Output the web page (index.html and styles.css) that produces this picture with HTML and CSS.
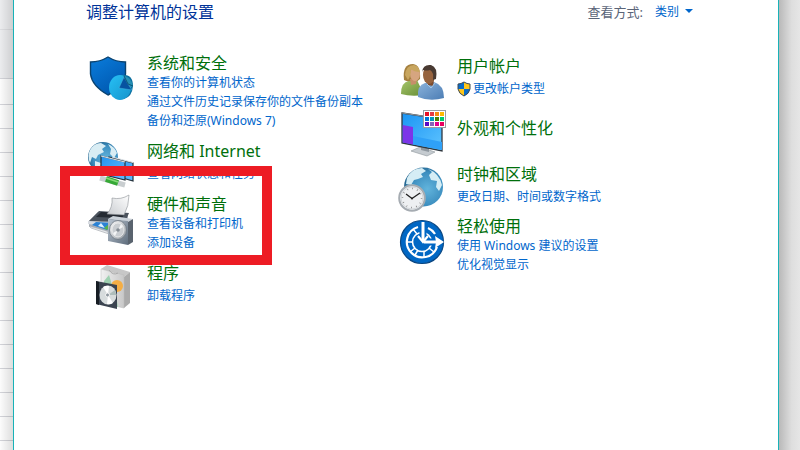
FILE: index.html
```html
<!DOCTYPE html>
<html lang="zh-CN">
<head>
    <meta charset="UTF-8">
    <meta name="viewport" content="width=device-width, initial-scale=1.0">
    <title>控制面板</title>
    <link rel="stylesheet" href="styles.css">
</head>
<body>
    <div class="behind-left"></div>
    <main class="panel">
        <header class="panel-header">
            <h1>调整计算机的设置</h1>
            <div class="view-by">
                <label for="view">查看方式:</label>
                <span class="view-select">
                    <select id="view">
                        <option>类别</option>
                    </select>
                </span>
            </div>
        </header>

        <div class="columns">
            <div class="column">
                <section class="category">
                    <svg class="icon" viewBox="0 0 48 46">
                        <defs>
                            <linearGradient id="shield" x1="0" y1="0" x2="0.6" y2="1">
                                <stop offset="0" stop-color="#0a7ddc"/>
                                <stop offset="1" stop-color="#0058b0"/>
                            </linearGradient>
                            <linearGradient id="pie" x1="0" y1="0" x2="1" y2="1">
                                <stop offset="0" stop-color="#27c0f5"/>
                                <stop offset="1" stop-color="#1594cc"/>
                            </linearGradient>
                        </defs>
                        <path d="M3.500 9 Q13 9 21 4 Q29 9 38.500 9 V21 Q37 34 21 42 Q5 33 3.500 21 Z" fill="url(#shield)" stroke="#0a4370" stroke-width="1.400"/>
                        <path d="M33 22 Q46 20 46 33 Q45 44 37 46 L32 46 Z" fill="#0b6f9f"/>
                        <ellipse cx="33" cy="34.500" rx="11" ry="12.500" fill="url(#pie)"/>
                        <path d="M37 23 Q44 24 46 33 L41 36 Z" fill="#2690b5"/>
                        <path d="M37 24 L32 35 L45 37 L41 31 Z" fill="#0752a0" stroke="#47b7dd" stroke-width=".5"/>
                        <path d="M37 23 L41 31 L46 33" fill="none" stroke="#0b5377"/>
                    </svg>
                    <div class="category-text">
                        <h2><a href="#">系统和安全</a></h2>
                        <ul>
                            <li><a href="#">查看你的计算机状态</a></li>
                            <li><a href="#">通过文件历史记录保存你的文件备份副本</a></li>
                            <li><a href="#">备份和还原(Windows 7)</a></li>
                        </ul>
                    </div>
                </section>

                <section class="category single">
                    <svg class="icon" viewBox="0 0 48 46">
                        <defs>
                            <radialGradient id="globe" cx=".6" cy=".55" r=".6">
                                <stop offset="0" stop-color="#62b4dc"/>
                                <stop offset=".7" stop-color="#3d8fc0"/>
                                <stop offset="1" stop-color="#24658f"/>
                            </radialGradient>
                            <linearGradient id="screen" x1="0" y1="0" x2="1" y2="1">
                                <stop offset="0" stop-color="#2493ec"/>
                                <stop offset="1" stop-color="#62baff"/>
                            </linearGradient>
                        </defs>
                        <circle cx="16" cy="18" r="15" fill="url(#globe)"/>
                        <path d="M3 11 Q7 4 14 4 L19 7 L15 10 L17 13 L11 16 L9 20 L5 18 L3 24 Q0 17 3 11 Z M21 5 Q28 8 30 14 L27 19 L23 15 L24 10 Z M8 22 L14 24 L13 31 L8 29 Z" fill="#d9edf4"/>
                        <path d="M22 18 L46 24 V42 L22 35 Z" fill="url(#screen)" stroke="#24323d" stroke-width="1.200"/>
                        <path d="M14 17 L38 23 V41 L14 35 Z" fill="url(#screen)" stroke="#24323d" stroke-width="1.200"/>
                        <path d="M14 17 L38 23 M25 18 L46 23.500" stroke="#dce2e6" stroke-width="1.200"/>
                        <path d="M13 39 L38 46" stroke="#c9ced0" stroke-width="5"/>
                        <path d="M19 40 L31 44" stroke="#36a936" stroke-width="6"/>
                        <path d="M19 39 L31 43" stroke="#86da78" stroke-width="1.500"/>
                    </svg>
                    <div class="category-text">
                        <h2><a href="#">网络和 Internet</a></h2>
                        <ul>
                            <li><a href="#">查看网络状态和任务</a></li>
                        </ul>
                    </div>
                </section>

                <section class="category highlighted">
                    <svg class="icon" viewBox="0 0 48 46">
                        <defs>
                            <linearGradient id="paper" x1="0" y1="1" x2="1" y2="0">
                                <stop offset="0" stop-color="#c9ccd0"/>
                                <stop offset="1" stop-color="#fff"/>
                            </linearGradient>
                            <linearGradient id="speaker" x1="0" y1="0" x2="1" y2="1">
                                <stop offset="0" stop-color="#b9c4d0"/>
                                <stop offset="1" stop-color="#5f6d7c"/>
                            </linearGradient>
                            <linearGradient id="cone" x1="0" y1="0" x2="1" y2="1">
                                <stop offset="0" stop-color="#fff"/>
                                <stop offset="1" stop-color="#8d959d"/>
                            </linearGradient>
                        </defs>
                        <path d="M2 27 L11 18 L41 19 V31 L22 38 L2 32 Z" fill="#a9afb8"/>
                        <path d="M2 27 L12 17 L42 19 L38 28 Z" fill="#4b535d"/>
                        <path d="M14 18 L38 19 L35 24 L9 23 Z" fill="#252b33"/>
                        <path d="M20 20 Q26 13 25 4 Q34 6 42 1 Q42 12 37 21 Z" fill="url(#paper)" stroke="#8c9095" stroke-width=".6"/>
                        <path d="M1 27 L28 29 L24 33 L1 30 Z" fill="#d7dbe1"/>
                        <path d="M5 31 L9 28 L27 29 L20 36 Z" fill="#2b82d4"/>
                        <path d="M11 32 L14 29 L18 34 Z" fill="#dff1ff"/>
                        <path d="M17 34 L22 30 L25 31 L20 36 Z" fill="#56b44a"/>
                        <path d="M2 32 L20 37 L22 40 L4 34 Z" fill="#e7e9ec" stroke="#8e949b" stroke-width=".5"/>
                        <path d="M21 25 L26 22 L46 25 L41 28 Z" fill="#ccd3da"/>
                        <path d="M41 28 L46 25 V48 L41 51 Z" fill="#59636e"/>
                        <path d="M21 25 L41 27 V51 L21 47 Z" fill="url(#speaker)"/>
                        <ellipse cx="31" cy="36" rx="8.500" ry="9.500" fill="url(#cone)" stroke="#6d7781" stroke-width=".8"/>
                        <ellipse cx="31" cy="36" rx="6" ry="7" fill="#c9cdd1" stroke="#eee" stroke-width=".8"/>
                        <path d="M31 36 L34 30 L36 33 Z M31 36 L28 42 L26 39 Z" fill="#f4f5f6"/>
                        <circle cx="31" cy="36" r="1.800" fill="#858d95"/>
                    </svg>
                    <div class="category-text">
                        <h2><a href="#">硬件和声音</a></h2>
                        <ul>
                            <li><a href="#">查看设备和打印机</a></li>
                            <li><a href="#">添加设备</a></li>
                        </ul>
                    </div>
                </section>

                <section class="category single">
                    <svg class="icon" viewBox="0 0 48 46">
                        <defs>
                            <linearGradient id="box" x1="0" y1="0" x2="1" y2="0">
                                <stop offset="0" stop-color="#f1f1f1"/>
                                <stop offset="1" stop-color="#c8c8c8"/>
                            </linearGradient>
                        </defs>
                        <path d="M14 8 L20 4 L43 11 L37 16 Z" fill="#c7c7c7"/>
                        <path d="M37 16 L43 11 V42 L37 47 Z" fill="#aaa"/>
                        <path d="M14 8 L37 14 V47 L14 42 Z" fill="url(#box)" stroke="#bbb" stroke-width=".5"/>
                        <path d="M22 9 Q26 15 31 12" fill="none" stroke="#aaa"/>
                        <circle cx="30" cy="25" r="6" fill="#f4ae45"/>
                        <path d="M17 20 L22 14 L30 40 L31 46 L17 40 Z" fill="#9ed0b0"/>
                        <path d="M9 20 L30 24 V48 L9 43 Z" fill="#3b4450"/>
                        <path d="M9 20 L12 21 V44 L9 43 Z" fill="#171d24"/>
                        <ellipse cx="21" cy="34" rx="8.500" ry="9.500" fill="#d7dcdd"/>
                        <path d="M21 34 L16 26 Q19 24 22 25 Z M21 34 L26 42 Q23 44 20 43 Z" fill="#fff"/>
                        <path d="M21 34 L28 29 L29.500 34 Z" fill="#aebdbb"/>
                        <circle cx="20.500" cy="34" r="2" fill="#8f989f" stroke="#f5f5f5"/>
                    </svg>
                    <div class="category-text">
                        <h2><a href="#">程序</a></h2>
                        <ul>
                            <li><a href="#">卸载程序</a></li>
                        </ul>
                    </div>
                </section>
            </div>

            <div class="column column-right">
                <section class="category single">
                    <svg class="icon" viewBox="0 0 48 46">
                        <defs>
                            <linearGradient id="green" x1="0" y1="0" x2="1" y2="1">
                                <stop offset="0" stop-color="#a7c66b"/>
                                <stop offset="1" stop-color="#668d35"/>
                            </linearGradient>
                            <linearGradient id="blue" x1="0" y1="0" x2="1" y2="1">
                                <stop offset="0" stop-color="#8cb3dc"/>
                                <stop offset="1" stop-color="#4b7db4"/>
                            </linearGradient>
                        </defs>
                        <path d="M7 26 Q5 10 16 10 Q24 11 23 25 L17 30 Z" fill="#a5803f"/>
                        <path d="M4 40 Q4 28 12 27 L20 26 L27 41 Q14 43 4 40 Z" fill="url(#green)"/>
                        <path d="M13 25 L20 25 L19 30 L14 31 Z" fill="#c68e6a"/>
                        <ellipse cx="18" cy="20" rx="5" ry="7" fill="#d6a580"/>
                        <path d="M8 21 Q9 11 17 11 Q22 12 23 18 Q17 18 14 15 Q14 22 11 26 Z" fill="#c8a65f"/>
                        <path d="M21 43 Q20 31 28 29 L37 28 Q47 31 47 44 Q33 48 21 43 Z" fill="url(#blue)"/>
                        <path d="M29 26 L37 26 L36 32 L31 31 Z" fill="#7e4c2e"/>
                        <ellipse cx="32" cy="21" rx="6" ry="9" fill="#96633f"/>
                        <path d="M25 18 Q26 10 34 11 Q41 13 39 25 L36 26 Q37 18 33 16 Q29 17 26 16 Z" fill="#493a32"/>
                        <path d="M30 30 L34 34 L38 29" fill="none" stroke="#a9c8e6"/>
                    </svg>
                    <div class="category-text">
                        <h2><a href="#">用户帐户</a></h2>
                        <ul>
                            <li>
                                <a href="#" class="with-shield">
                                    <svg class="uac" viewBox="0 0 14 16">
                                        <path d="M7 1 Q10 3 13 3 V8 H7 Z" fill="#ffc61a"/>
                                        <path d="M7 1 Q4 3 1 3 V8 H7 Z" fill="#0a6cc9"/>
                                        <path d="M1 8 H7 V15 Q2 13 1 8 Z" fill="#ffc61a"/>
                                        <path d="M13 8 H7 V15 Q12 13 13 8 Z" fill="#0a6cc9"/>
                                        <path d="M7 1 Q10 3 13 3 V8 Q12 13 7 15 Q2 13 1 8 V3 Q4 3 7 1 Z" fill="none" stroke="#3d4a55"/>
                                    </svg>
                                    更改帐户类型
                                </a>
                            </li>
                        </ul>
                    </div>
                </section>

                <section class="category solo">
                    <svg class="icon" viewBox="0 0 48 46">
                        <defs>
                            <linearGradient id="display" x1="0" y1="0" x2="1" y2="1">
                                <stop offset="0" stop-color="#1a94f4"/>
                                <stop offset="1" stop-color="#60c5ff"/>
                            </linearGradient>
                        </defs>
                        <path d="M14 43 L23 39 L38 44 L30 48 Z" fill="#c5cbd0" stroke="#8d959b" stroke-width=".6"/>
                        <path d="M24 37 L32 39 V44 L24 42 Z" fill="#8e979f"/>
                        <path d="M5 5 L45 11 V43 L5 35 Z" fill="url(#display)" stroke="#303840" stroke-width="1.300"/>
                        <path d="M5.700 17 L16 19 V36.500 L5.700 34.500 Z" fill="#7c35e8"/>
                        <path d="M16 28 L45 34 V42 L16 36.500 Z" fill="#2fa1f8"/>
                        <path d="M5 5 L45 11" stroke="#8b959e"/>
                        <rect x="26.500" y="2.500" width="22" height="17" fill="#fff" stroke="#989da2"/>
                        <g>
                            <rect x="28" y="4" width="4" height="4" fill="#e81123"/>
                            <rect x="33" y="4" width="4" height="4" fill="#e33b43"/>
                            <rect x="38" y="4" width="4" height="4" fill="#f7890c"/>
                            <rect x="43" y="4" width="4" height="4" fill="#ffb900"/>
                            <rect x="28" y="9" width="4" height="4" fill="#0078d7"/>
                            <rect x="33" y="9" width="4" height="4" fill="#0099bc"/>
                            <rect x="38" y="9" width="4" height="4" fill="#498205"/>
                            <rect x="43" y="9" width="4" height="4" fill="#00cc6a"/>
                            <rect x="28" y="14" width="4" height="4" fill="#5a08c4"/>
                            <rect x="33" y="14" width="4" height="4" fill="#8764b8"/>
                            <rect x="38" y="14" width="4" height="4" fill="#e3008c"/>
                            <rect x="43" y="14" width="4" height="4" fill="#ea005e"/>
                        </g>
                    </svg>
                    <div class="category-text">
                        <h2><a href="#">外观和个性化</a></h2>
                    </div>
                </section>

                <section class="category single">
                    <svg class="icon" viewBox="0 0 48 46">
                        <circle cx="26.500" cy="25" r="19.500" fill="url(#globe)"/>
                        <path d="M10 16 Q15 6 25 6 L29 9 L24 12 L26 15 L21 17 L17 18 L14 23 L9 22 Z M31 7 Q42 11 45 23 L42 29 L39 25 L40 19 L34 18 L32 13 L35 10 Z M13 22 L18 23 L20 26 L14 27 Z" fill="#d5edf5"/>
                        <circle cx="15" cy="36" r="12.800" fill="#eef0f2" stroke="#a6acb2" stroke-width="2"/>
                        <circle cx="15" cy="36" r="11" fill="none" stroke="#d4d8dc"/>
                        <circle cx="15" cy="36" r="9.500" fill="none" stroke="#777" stroke-width="1.500" stroke-dasharray=".7 4.270"/>
                        <path d="M9 32 L15 36.500 L23 31" fill="none" stroke="#222" stroke-width="1.300"/>
                        <circle cx="15" cy="36.500" r="1" fill="#222"/>
                    </svg>
                    <div class="category-text">
                        <h2><a href="#">时钟和区域</a></h2>
                        <ul>
                            <li><a href="#">更改日期、时间或数字格式</a></li>
                        </ul>
                    </div>
                </section>

                <section class="category">
                    <svg class="icon" viewBox="0 0 48 46">
                        <circle cx="25" cy="26" r="21.500" fill="#0067c4" stroke="#0a4783" stroke-width="1.200"/>
                        <path d="M21 11 A15.500 15.500 0 1 0 40 31" fill="none" stroke="#fff" stroke-width="2.200"/>
                        <path d="M31 12 A15.500 15.500 0 0 1 38 18" fill="none" stroke="#fff" stroke-width="2.200"/>
                        <circle cx="25" cy="26" r="9.500" fill="#0067c4" stroke="#fff" stroke-width="1.600"/>
                        <path d="M16 13 L20 18 M10 26 H16 M13 36 L18 32 M18 39 L21 34 M27 41 V35 M37 36 L32 32" stroke="#fff" stroke-width="1.500"/>
                        <path d="M26 7 V26 H43" fill="none" stroke="#0067c4" stroke-width="7"/>
                        <path d="M26 6 V24" stroke="#fff" stroke-width="3"/>
                        <path d="M21 20 L26 26 L31 20" fill="none" stroke="#fff" stroke-width="2.200"/>
                        <path d="M27 26 H43" stroke="#fff" stroke-width="3"/>
                        <path d="M38 20 L47 26 L38 32 L39 26 Z" fill="#fff"/>
                    </svg>
                    <div class="category-text">
                        <h2><a href="#">轻松使用</a></h2>
                        <ul>
                            <li><a href="#">使用 Windows 建议的设置</a></li>
                            <li><a href="#">优化视觉显示</a></li>
                        </ul>
                    </div>
                </section>
            </div>
        </div>
    </main>
    <div class="behind-right"></div>
</body>
</html>
```

FILE: styles.css
```css
body {
    font-family: "Noto Sans", "Noto Sans CJK SC", sans-serif;
    font-size: 12px;
    margin: 0;
    min-height: 100vh;
    display: grid;
    grid-template-columns: 13px 1fr 21px;
    background-color: #fff;
}

h1, h2, ul {
    margin: 0;
    padding: 0;
    font-weight: normal;
}

ul {
    list-style: none;
}

a {
    color: #0066cc;
    text-decoration: none;
}

a:hover {
    text-decoration: underline;
}

/* windows showing on both sides of the panel */
.behind-left {
    background:
        linear-gradient(to right, rgba(0, 0, 0, 0), rgba(0, 0, 0, 0.12)),
        linear-gradient(#dcdde0, #dcdde0) 0 29px / 100% 1px no-repeat,
        linear-gradient(#ebecee, #ebecee) 0 0 / 100% 78px no-repeat,
        linear-gradient(#d2d3d8, #d2d3d8) 0 78px / 100% 1px no-repeat,
        linear-gradient(#fcfcfc, #fcfcfc) 0 79px / 100% 25px no-repeat,
        repeating-linear-gradient(#d2d3d8 0 1px, #fcfcfc 1px 24px) 0 104px;
}

.behind-right {
    background: linear-gradient(to right, #b9b9b9, #dedede 60%, #e6e6e6);
}

.panel {
    background-color: #fff;
    border-left: 1px solid #18b2b8;
    border-right: 1px solid #18b2b8;
    padding: 0 85px 0 72px;
}

.panel-header {
    display: flex;
    justify-content: space-between;
    align-items: flex-start;
    height: 24px;
    margin-bottom: 29px;
}

h1 {
    color: #003399;
    font-size: 16px;
    line-height: 24px;
}

.view-by {
    display: flex;
    align-items: center;
    gap: 12px;
    height: 22px;
}

.view-by label {
    color: #5a6478;
    font-size: 13px;
}

.view-select {
    display: flex;
    align-items: center;
    gap: 5px;
}

.view-select::after {
    content: "";
    border: 4px solid transparent;
    border-top-color: #0066cc;
    border-bottom: 0;
}

.view-select select {
    appearance: none;
    border: none;
    background: none;
    padding: 0;
    color: #0066cc;
    font-family: inherit;
    font-size: 12px;
    cursor: pointer;
}

.columns {
    display: grid;
    grid-template-columns: 310px 1fr;
    padding-left: 1px;
}

.column {
    display: flex;
    flex-direction: column;
    gap: 9px;
}

.column-right {
    gap: 8px;
    padding-top: 1px;
}

.category {
    display: flex;
    gap: 12px;
    min-height: 46px;
    position: relative;
}

.icon {
    flex: none;
    width: 48px;
    height: 46px;
    overflow: visible;
}

.category-text {
    align-self: center;
}

h2 {
    font-size: 16px;
    line-height: 20px;
}

h2 a {
    color: #006f0b;
}

.category li {
    line-height: 19px;
    white-space: nowrap;
}

.single h2 {
    margin-bottom: 3px;
}

.solo h2 {
    margin-bottom: 6px;
}

.with-shield {
    display: flex;
    align-items: center;
    gap: 2px;
}

.uac {
    width: 14px;
    height: 16px;
}

/* red marker around the hardware entry */
.highlighted::after {
    content: "";
    position: absolute;
    top: -28px;
    left: -27px;
    width: 192px;
    height: 79px;
    border: 10px solid #ed1c24;
    z-index: 1;
    pointer-events: none;
}
```
